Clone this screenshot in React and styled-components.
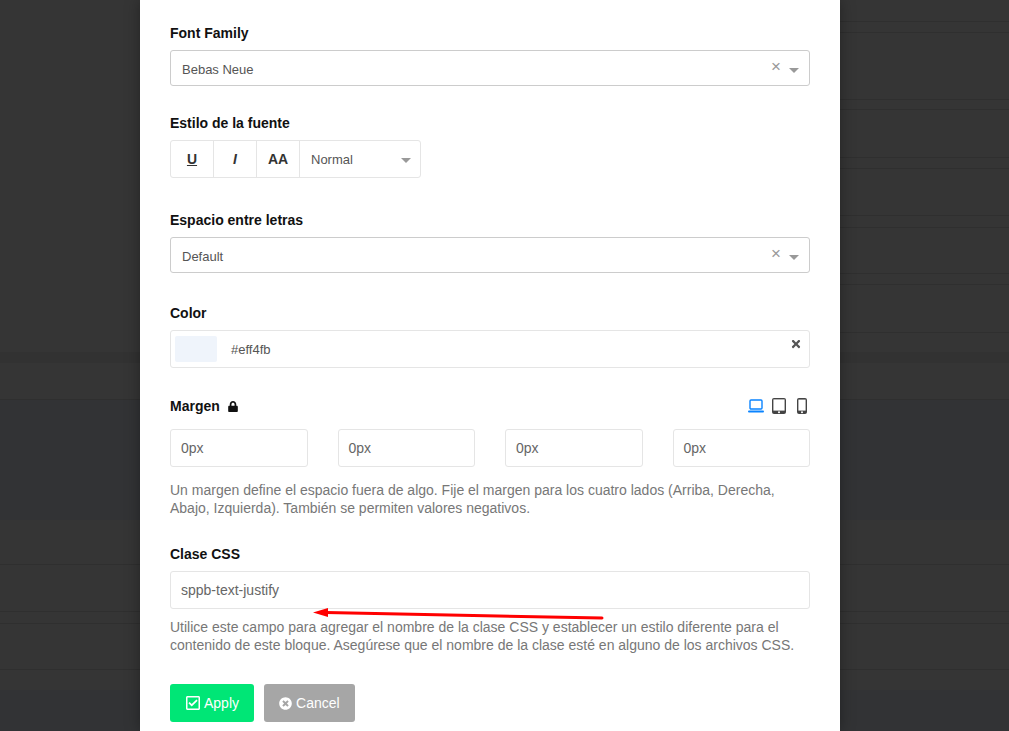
import styled, { createGlobalStyle } from "styled-components";
import { FaLock, FaTimes, FaTimesCircle, FaRegCheckSquare } from "react-icons/fa";

const GlobalStyle = createGlobalStyle`
  html, body {
    margin: 0;
    height: 100%;
    overflow: hidden;
  }
  * {
    box-sizing: border-box;
  }
`;

const Page = styled.div`
  display: flex;
  height: 731px;
  background: #343434;
  font-family: "Liberation Sans", Arial, sans-serif;
`;

const Backdrop = styled.div`
  flex: 1;
  display: flex;
  flex-direction: column;
  &.left {
    flex: none;
    width: 140px;
  }
`;

const Band = styled.div`
  height: ${(props) => props.$height}px;
  flex: none;
  background: ${(props) => props.$color || "#353535"};
  border-bottom: ${(props) => (props.$line ? "1px solid #2f2f2f" : "none")};
`;

const Modal = styled.div`
  position: relative;
  width: 700px;
  height: 731px;
  flex: none;
  padding: 24px 30px 0;
  background: #fff;
  box-shadow: 0 0 14px rgba(0, 0, 0, 0.35);
`;

const Field = styled.div`
  margin-bottom: ${(props) => props.$gap}px;
`;

const Label = styled.div`
  display: flex;
  align-items: center;
  height: 18px;
  margin-bottom: 8px;
  color: #111;
  font-size: 14px;
  font-weight: 700;
  >svg {
    margin-left: 8px;
    width: 10px;
    height: 11px;
  }
`;

const SelectBox = styled.div`
  display: flex;
  align-items: center;
  height: 36px;
  padding: 3px 11px 0;
  border: 1px solid #ccc;
  border-radius: 3px;
  color: #555;
  font-size: 13px;
`;

const Grow = styled.span`
  flex: 1;
`;

const Clear = styled.span`
  margin-top: -5px;
  color: #999;
  font-size: 17px;
`;

const Caret = styled.span`
  width: 0;
  height: 0;
  margin: 1px -1px 0 8px;
  border-left: 5px solid transparent;
  border-right: 5px solid transparent;
  border-top: 5px solid #999;
`;

const FontStyle = styled.div`
  display: flex;
  width: 251px;
  height: 38px;
  border: 1px solid #e5e5e5;
  border-radius: 3px;
`;

const StyleButton = styled.div`
  display: flex;
  align-items: center;
  justify-content: center;
  width: 43px;
  border-right: 1px solid #e5e5e5;
  color: #333;
  font-size: 14px;
  font-weight: 700;
  font-style: ${(props) => (props.$italic ? "italic" : "normal")};
  text-decoration: ${(props) => (props.$underline ? "underline" : "none")};
`;

const WeightSelect = styled.div`
  flex: 1;
  display: flex;
  align-items: center;
  padding: 1px 10px 0 11px;
  color: #555;
  font-size: 13px;
`;

const ColorBox = styled.div`
  position: relative;
  display: flex;
  align-items: center;
  height: 38px;
  padding-left: 4px;
  border: 1px solid #e5e5e5;
  border-radius: 3px;
  color: #555;
  font-size: 13px;
`;

const Swatch = styled.div`
  width: 42px;
  height: 26px;
  margin-right: 14px;
  background: #eff4fb;
  border-radius: 2px;
`;

const ColorClear = styled(FaTimes)`
  position: absolute;
  top: 7px;
  right: 7px;
  width: 12px;
  height: 12px;
  color: #555;
`;

const LabelRow = styled.div`
  display: flex;
  justify-content: space-between;
  align-items: center;
  height: 18px;
  margin-bottom: 14px;
  >div {
    margin-bottom: 0;
  }
`;

const Devices = styled.div`
  display: flex;
  align-items: center;
  gap: 8px;
  margin-right: 3px;
`;

const Phone = styled.svg`
  margin-left: 3px;
`;

const InputGrid = styled.div`
  display: grid;
  grid-template-columns: repeat(4, 1fr);
  gap: 30px;
`;

const TextInput = styled.div`
  display: flex;
  align-items: center;
  height: 38px;
  padding: 0 10px;
  border: 1px solid #e5e5e5;
  border-radius: 3px;
  color: #666;
  font-size: 14px;
`;

const Help = styled.p`
  margin: ${(props) => props.$top}px 0 0;
  color: #777;
  font-size: 14px;
  line-height: 18px;
`;

const Actions = styled.div`
  display: flex;
  gap: 10px;
`;

const Button = styled.div`
  display: flex;
  align-items: center;
  gap: ${(props) => props.$gap}px;
  height: 38px;
  padding: 0 15px;
  border-radius: 3px;
  background: ${(props) => props.$color};
  color: #fff;
  font-size: 14px;
  >svg {
    width: ${(props) => props.$icon}px;
    height: ${(props) => props.$icon}px;
  }
`;

const Arrow = styled.svg`
  position: absolute;
  left: 172px;
  top: 605px;
`;

const blue = "#323335";

const lowerBands = [
  { height: 37, line: true },
  { height: 120, color: blue },
  { height: 45, line: true },
  { height: 47, line: true },
  { height: 12, line: true },
  { height: 46, line: true },
  { height: 20 },
  { height: 41, color: blue },
];

const leftBands = [
  { height: 352 },
  { height: 11, color: "#323232" },
  ...lowerBands,
];

const rightBands = [
  { height: 22, line: true },
  { height: 11, line: true },
  { height: 67, line: true },
  { height: 10, line: true },
  { height: 48, line: true },
  { height: 11, line: true },
  { height: 47, line: true },
  { height: 12, line: true },
  { height: 46, line: true },
  { height: 11, line: true },
  { height: 48, line: true },
  { height: 19 },
  { height: 11, color: "#323232" },
  ...lowerBands,
];

const LaptopIcon = () => (
  <svg width="16" height="14" viewBox="0 0 16 14">
    <rect x="2" y="1" width="12" height="9" rx="1" fill="none" stroke="#0a84ff" strokeWidth="1.4" />
    <rect x="0" y="11.5" width="16" height="2" rx="1" fill="#0a84ff" />
  </svg>
);

const TabletIcon = () => (
  <svg width="14" height="16" viewBox="0 0 14 16">
    <rect x="0" y="0" width="14" height="16" rx="2" fill="#444" />
    <rect x="1.4" y="1.4" width="11.2" height="11.2" fill="#fff" />
    <circle cx="7" cy="14.3" r="1" fill="#fff" />
  </svg>
);

const PhoneIcon = () => (
  <Phone width="10" height="16" viewBox="0 0 10 16">
    <rect x="0" y="0" width="10" height="16" rx="2" fill="#444" />
    <rect x="1.4" y="1.6" width="7.2" height="11" fill="#fff" />
    <circle cx="5" cy="14.3" r="1" fill="#fff" />
  </Phone>
);

const margins = ["0px", "0px", "0px", "0px"];

const App = () => {
  return (
    <Page>
      <GlobalStyle />
      <Backdrop className="left">
        {leftBands.map((band, i) => (
          <Band key={i} $height={band.height} $color={band.color} $line={band.line} />
        ))}
      </Backdrop>
      <Modal>
        <Field $gap={28}>
          <Label>Font Family</Label>
          <SelectBox>
            Bebas Neue
            <Grow />
            <Clear>×</Clear>
            <Caret />
          </SelectBox>
        </Field>
        <Field $gap={33}>
          <Label>Estilo de la fuente</Label>
          <FontStyle>
            <StyleButton $underline>U</StyleButton>
            <StyleButton $italic>I</StyleButton>
            <StyleButton>AA</StyleButton>
            <WeightSelect>
              Normal
              <Grow />
              <Caret />
            </WeightSelect>
          </FontStyle>
        </Field>
        <Field $gap={31}>
          <Label>Espacio entre letras</Label>
          <SelectBox>
            Default
            <Grow />
            <Clear>×</Clear>
            <Caret />
          </SelectBox>
        </Field>
        <Field $gap={29}>
          <Label>Color</Label>
          <ColorBox>
            <Swatch />
            #eff4fb
            <ColorClear />
          </ColorBox>
        </Field>
        <Field $gap={28}>
          <LabelRow>
            <Label>
              Margen
              <FaLock />
            </Label>
            <Devices>
              <LaptopIcon />
              <TabletIcon />
              <PhoneIcon />
            </Devices>
          </LabelRow>
          <InputGrid>
            {margins.map((value, i) => (
              <TextInput key={i}>{value}</TextInput>
            ))}
          </InputGrid>
          <Help $top={14}>
            Un margen define el espacio fuera de algo. Fije el margen para los cuatro lados (Arriba, Derecha,
            Abajo, Izquierda). También se permiten valores negativos.
          </Help>
        </Field>
        <Field $gap={30}>
          <Label>Clase CSS</Label>
          <TextInput>sppb-text-justify</TextInput>
          <Help $top={9}>
            Utilice este campo para agregar el nombre de la clase CSS y establecer un estilo diferente para el
            contenido de este bloque. Asegúrese que el nombre de la clase esté en alguno de los archivos CSS.
          </Help>
        </Field>
        <Actions>
          <Button $color="#00e676" $icon={16} $gap={3}>
            <FaRegCheckSquare />
            Apply
          </Button>
          <Button $color="#a6a6a6" $icon={13} $gap={4}>
            <FaTimesCircle />
            Cancel
          </Button>
        </Actions>
        <Arrow width="292" height="16" viewBox="0 0 292 16">
          <path d="M290 13 L14 7.5" stroke="#f00" strokeWidth="3" strokeLinecap="round" fill="none" />
          <path d="M1 7.5 L16 3 L16 12 Z" fill="#f00" />
        </Arrow>
      </Modal>
      <Backdrop>
        {rightBands.map((band, i) => (
          <Band key={i} $height={band.height} $color={band.color} $line={band.line} />
        ))}
      </Backdrop>
    </Page>
  );
};

export default App;
